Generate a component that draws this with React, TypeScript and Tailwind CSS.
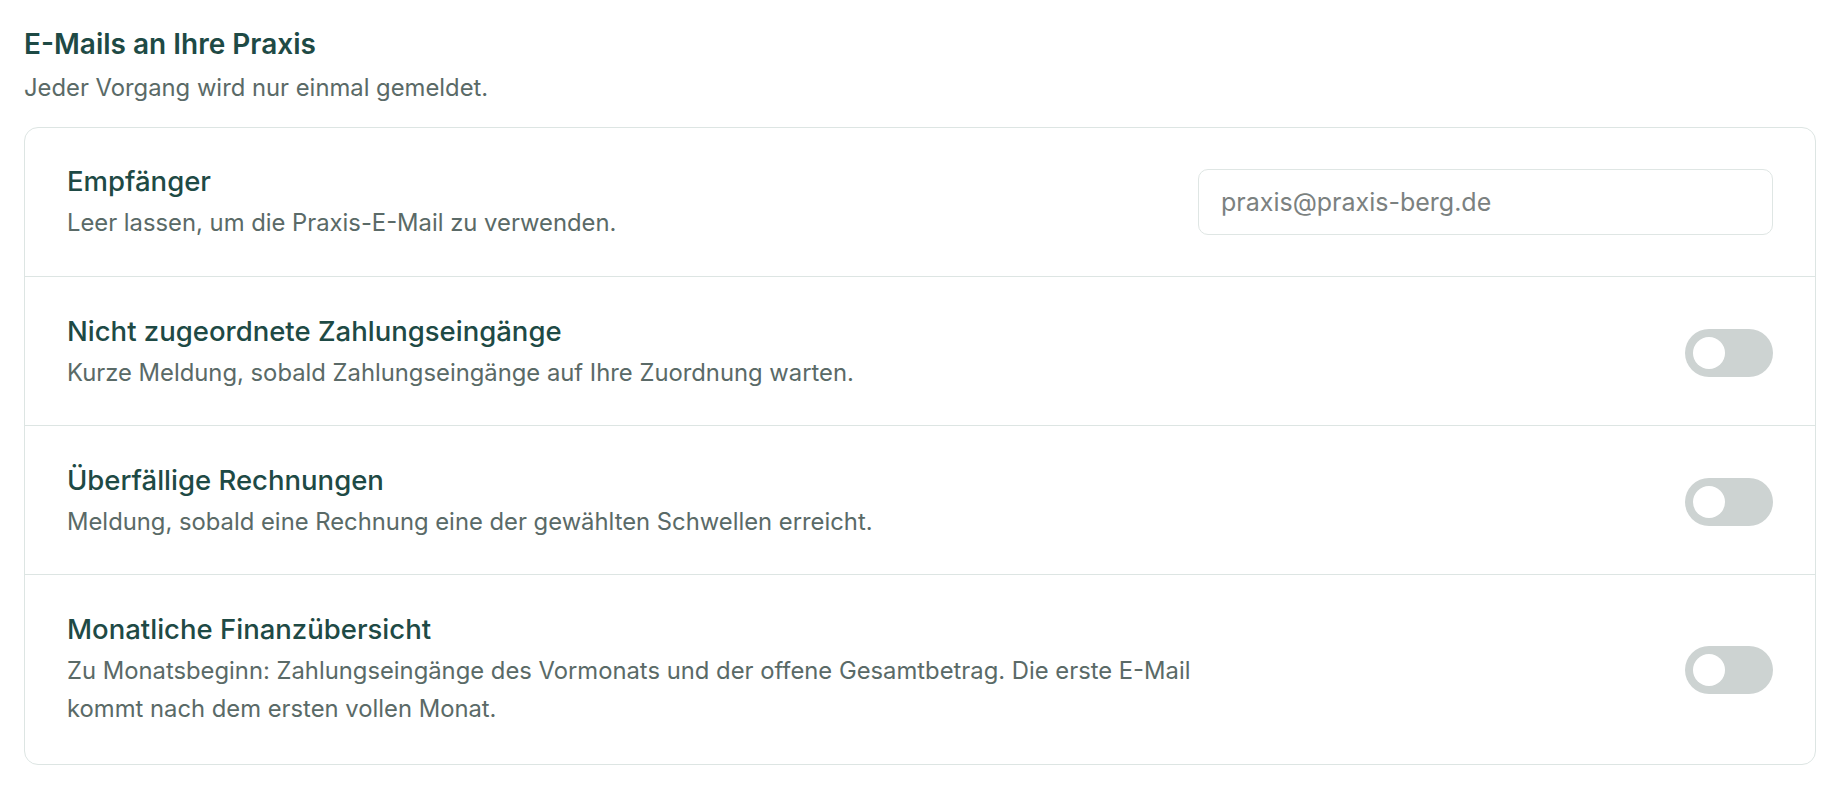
import { useState } from 'react';

type Row = {
  title: string;
  description: string;
};

const rows: Row[] = [
  {
    title: 'Nicht zugeordnete Zahlungseingänge',
    description: 'Kurze Meldung, sobald Zahlungseingänge auf Ihre Zuordnung warten.',
  },
  {
    title: 'Überfällige Rechnungen',
    description: 'Meldung, sobald eine Rechnung eine der gewählten Schwellen erreicht.',
  },
  {
    title: 'Monatliche Finanzübersicht',
    description:
      'Zu Monatsbeginn: Zahlungseingänge des Vormonats und der offene Gesamtbetrag. Die erste E-Mail kommt nach dem ersten vollen Monat.',
  },
];

const Toggle = ({ checked, onChange }: { checked: boolean; onChange: (v: boolean) => void }) => (
  <button
    type="button"
    role="switch"
    aria-checked={checked}
    onClick={() => onChange(!checked)}
    className={`flex h-[48px] w-[88px] shrink-0 items-center rounded-full px-[8px] transition-colors ${
      checked ? 'bg-[#1e4a45]' : 'bg-[#cdd3d2]'
    }`}
  >
    <span
      className={`h-[32px] w-[32px] rounded-full bg-white transition-transform ${
        checked ? 'translate-x-[40px]' : 'translate-x-0'
      }`}
    />
  </button>
);

const RowText = ({ title, description }: Row) => (
  <div className="flex max-w-[1170px] flex-col">
    <div className="text-[27.5px] font-medium leading-[36px] text-[#1e4a45]">{title}</div>
    <div className="mt-[5px] text-[23.8px] leading-[38px] text-[#5a6a67]">{description}</div>
  </div>
);

export default function App() {
  const [enabled, setEnabled] = useState<boolean[]>([false, false, false]);

  return (
    <div className="min-h-screen bg-white px-[24px] pt-[26px] font-['Inter',sans-serif] antialiased">
      <h2 className="text-[28px] font-semibold leading-[36px] text-[#1e4a45]">E-Mails an Ihre Praxis</h2>
      <p className="mt-[7px] text-[23.8px] leading-[38px] text-[#5a6a67]">
        Jeder Vorgang wird nur einmal gemeldet.
      </p>

      <div className="mt-[20px] flex flex-col divide-y divide-[#dde5e3] rounded-[14px] border border-[#dde5e3] bg-white">
        <div className="flex items-center justify-between gap-8 px-[42px] pb-[34px] pt-[35px]">
          <RowText title="Empfänger" description="Leer lassen, um die Praxis-E-Mail zu verwenden." />
          <input
            type="email"
            placeholder="praxis@praxis-berg.de"
            className="-mt-[2px] h-[66px] w-[575px] rounded-[10px] border border-[#dfe6e4] bg-white px-[22px] text-[25px] text-[#1e4a45] outline-none placeholder:text-[#7b8180]"
          />
        </div>
        {rows.map((row, i) => (
          <div
            key={row.title}
            className="flex items-center justify-between gap-8 px-[42px] pb-[33px] pt-[36px] last:pb-[36px]"
          >
            <RowText {...row} />
            <Toggle
              checked={enabled[i]}
              onChange={(v) => setEnabled((prev) => prev.map((p, j) => (j === i ? v : p)))}
            />
          </div>
        ))}
      </div>
    </div>
  );
}
